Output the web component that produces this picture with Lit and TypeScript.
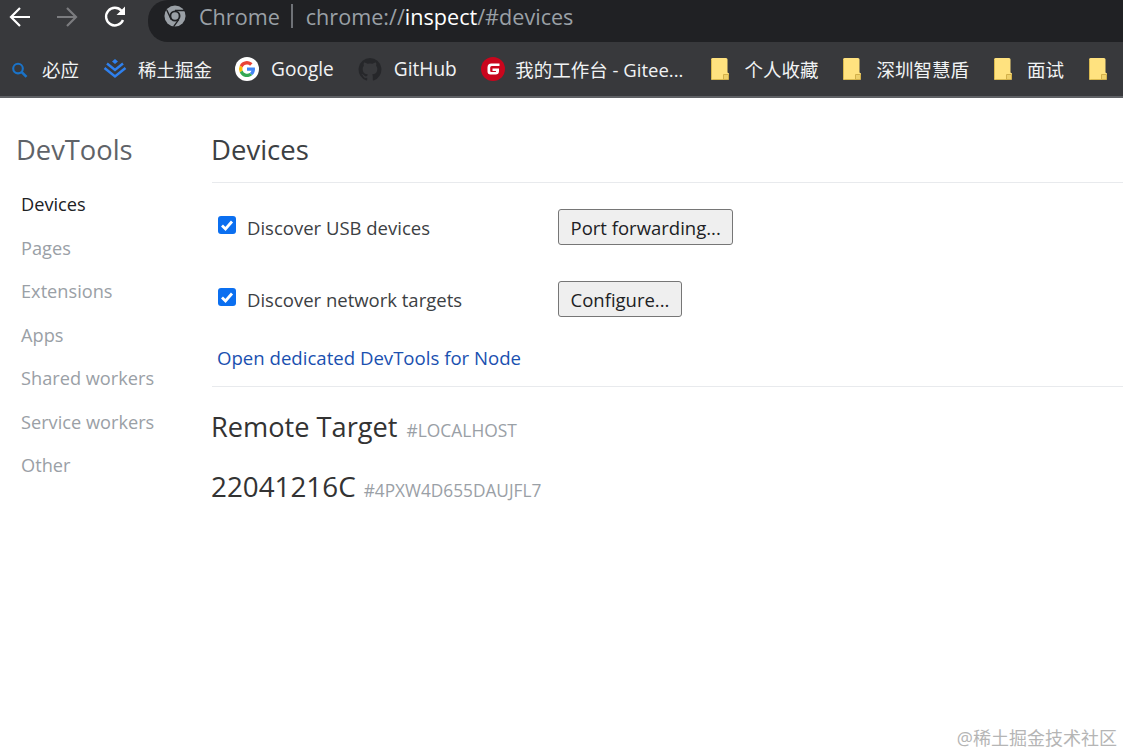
import { LitElement, html, css, svg } from "lit";
import { customElement } from "lit/decorators.js";

const folder = html`<svg class="folder" width="18" height="22" viewBox="0 0 18 22">
  <path d="M0 1.500Q0 0 1.500 0H15Q16.500 0 16.500 1.500V14.500L18 15.500V21L17 22H1.500Q0 22 0 20.500Z" fill="#ffe27f" />
  <path d="M0.500 1.500V20.500Q0.500 21.500 1.500 21.500H13" fill="none" stroke="#d9b94f" />
  <path d="M12.500 21.500V16.500H17.500V21L17 21.500Z" fill="#eed06a" stroke="#d3b04a" />
</svg>`;

const icons = {
  bing: svg`<circle cx="10.300" cy="10.900" r="5.500" fill="none" stroke="#1a73c8" stroke-width="2.400" /><path d="M14.500 15L20 20.500" stroke="#1a73c8" stroke-width="3" />`,
  juejin: svg`<path d="M12 2L9 4.500L12 7L15 4.500Z" fill="#2f80ed" /><path d="M4 7.500L12 14L20 7.500M1.500 12L12 20.500L22.500 12" transform="translate(0,-1)" fill="none" stroke="#2f80ed" stroke-width="2.500" />`,
  google: svg`<circle cx="12" cy="12" r="12" fill="#fff" />
    <path d="M12 7.500A4.500 4.500 0 0 1 15.100 8.700L17.500 6.300A8 8 0 0 0 4.800 8.400L7.600 10.600A4.700 4.700 0 0 1 12 7.500Z" fill="#ea4335" />
    <path d="M7.600 10.600L4.800 8.400A8 8 0 0 0 4.800 15.600L7.600 13.400A4.700 4.700 0 0 1 7.600 10.600Z" fill="#fbbc05" />
    <path d="M7.600 13.400L4.800 15.600A8 8 0 0 0 17.400 18L14.800 15.900A4.800 4.800 0 0 1 7.600 13.400Z" fill="#34a853" />
    <path d="M20 12.200C20 11.500 19.900 11 19.800 10.400H12V13.700H16.500A3.900 3.900 0 0 1 14.800 15.900L17.400 18C19 16.600 20 14.600 20 12.200Z" fill="#4285f4" />`,
  github: svg`<path d="M12 1A11.500 11.500 0 0 0 8.400 23.400C9 23.500 9.200 23.100 9.200 22.800V20.800C6 21.500 5.300 19.300 5.300 19.300C4.800 18 4 17.600 4 17.600C3 16.900 4.100 16.900 4.100 16.900C5.200 17 5.800 18.100 5.800 18.100C6.800 19.900 8.500 19.400 9.200 19C9.300 18.300 9.600 17.800 9.900 17.500C7.400 17.200 4.700 16.200 4.700 11.800C4.700 10.500 5.200 9.500 5.900 8.700C5.800 8.400 5.400 7.200 6 5.600C6 5.600 7 5.300 9.200 6.800A11 11 0 0 1 14.800 6.800C17 5.300 18 5.600 18 5.600C18.600 7.200 18.200 8.400 18.100 8.700C18.800 9.500 19.300 10.500 19.300 11.800C19.300 16.200 16.600 17.200 14.100 17.500C14.500 17.800 14.800 18.500 14.800 19.500V22.800C14.800 23.100 15 23.500 15.600 23.400A11.500 11.500 0 0 0 12 1Z" fill="#26272a" />`,
  gitee: svg`<circle cx="12" cy="12" r="12" fill="#c9061d" /><path d="M18.500 6.500H10.500A4 4 0 0 0 6.500 10.500V14.500A3 3 0 0 0 9.500 17.500H14.500A3.500 3.500 0 0 0 18 14V11.500H11.500V14H15V14.500A.7 .7 0 0 1 14.300 15H10.200A1 1 0 0 1 9.200 14V10.500A1.500 1.500 0 0 1 10.700 9H18.500Z" fill="#fff" />`,
};

type Bookmark = { label: string; icon?: keyof typeof icons; size?: number; latin?: boolean };

const bookmarks: Bookmark[] = [
  { label: "必应", icon: "bing", size: 21 },
  { label: "稀土掘金", icon: "juejin", size: 24 },
  { label: "Google", icon: "google", size: 24, latin: true },
  { label: "GitHub", icon: "github", size: 24, latin: true },
  { label: "我的工作台 - Gitee...", icon: "gitee", size: 24 },
  { label: "个人收藏" },
  { label: "深圳智慧盾" },
  { label: "面试" },
  { label: "" },
];

const navItems = ["Devices", "Pages", "Extensions", "Apps", "Shared workers", "Service workers", "Other"];

@customElement("app-root")
export class AppRoot extends LitElement {
  static styles = css`
    :host {
      display: block;
      position: relative;
      height: 755px;
      overflow: hidden;
      background: #fff;
      font-family: "Open Sans", "Noto Sans CJK SC", sans-serif;
      color: #3c4043;
    }
    .toolbar {
      display: flex;
      align-items: center;
      height: 42px;
      background: #38393c;
    }
    .nav-btns {
      display: flex;
      align-items: center;
      width: 148px;
      box-sizing: border-box;
      padding: 0 0 8px 8px;
      flex: none;
    }
    .nav-btns .fwd {
      margin: 0 23px;
    }
    .omnibox {
      flex: 1;
      height: 42px;
      display: flex;
      align-items: center;
      padding: 0 0 10px 16px;
      box-sizing: border-box;
      background: #202124;
      border-radius: 20px 0 0 20px;
      font-size: 21.600px;
      color: #9aa0a6;
      white-space: nowrap;
    }
    .omnibox .site {
      margin-left: 13px;
    }
    .omnibox .sep {
      width: 2px;
      height: 24px;
      margin: 0 13px 0 11px;
      background: #6f7277;
    }
    .omnibox b {
      font-weight: 500;
      color: #fff;
    }
    .bookmarks {
      display: flex;
      align-items: center;
      height: 54px;
      padding-left: 9px;
      background: #38393c;
      border-bottom: 2px solid #5f6165;
      overflow: hidden;
    }
    .bookmark {
      display: flex;
      align-items: center;
      flex: none;
      gap: 12px;
      margin-right: 24px;
      font-size: 18.500px;
      color: #f1f3f4;
      white-space: nowrap;
    }
    .bookmark:nth-child(2) {
      gap: 11px;
      margin-right: 23px;
    }
    .bookmark:nth-child(5) {
      gap: 10.500px;
      margin-right: 28px;
    }
    .bookmark:nth-child(n + 6) {
      margin-right: 25px;
    }
    .bookmark.latin {
      font-size: 19.100px;
    }
    .bookmark svg {
      flex: none;
      display: block;
    }
    .folder {
      margin-right: 3px;
    }
    .page {
      display: flex;
    }
    aside {
      width: 212px;
      flex: none;
    }
    aside h1 {
      margin: 0;
      padding: 32px 0 0 16px;
      height: 52px;
      font-size: 27.300px;
      line-height: 39px;
      font-weight: 400;
      color: #5f6368;
    }
    aside ul {
      list-style: none;
      margin: 0;
      padding: 1px 0 0 21px;
    }
    aside li {
      height: 43.500px;
      line-height: 43.500px;
      font-size: 18.200px;
      color: #9aa0a6;
      white-space: nowrap;
    }
    aside li.selected {
      color: #202124;
    }
    main {
      flex: 1;
    }
    main > h2 {
      margin: 0;
      padding-top: 32px;
      height: 52px;
      line-height: 39px;
      font-size: 27.500px;
      font-weight: 400;
      color: #3c4043;
      text-indent: -1px;
      border-bottom: 1px solid #e8eaed;
    }
    .option {
      display: flex;
      align-items: center;
      height: 36px;
      padding-left: 6px;
      font-size: 18.500px;
      white-space: nowrap;
    }
    .option.first {
      margin-top: 26px;
    }
    .option + .option {
      margin-top: 36px;
    }
    .check {
      width: 18px;
      height: 18px;
      flex: none;
      margin-top: -4px;
      display: block;
    }
    .option label {
      width: 311px;
      margin-left: 11px;
      padding-top: 1px;
      flex: none;
    }
    .option button {
      height: 36px;
      padding: 1px 11.500px 0;
      font: inherit;
      color: #202124;
      background: #efefef;
      border: 1px solid #767676;
      border-radius: 3px;
    }
    .link {
      display: block;
      margin-top: 25px;
      padding: 0 0 12px 5px;
      line-height: 32px;
      font-size: 18.600px;
      color: #1a50b0;
      text-decoration: none;
      border-bottom: 1px solid #e8eaed;
    }
    .target {
      display: flex;
      align-items: baseline;
      margin-left: -1px;
      white-space: nowrap;
      color: #333;
      line-height: 40px;
    }
    .target small {
      color: #9aa0a6;
      font-size: 17.400px;
      margin-left: 9px;
    }
    .remote {
      margin-top: 20px;
      font-size: 27.200px;
    }
    .device {
      margin-top: 16px;
      font-size: 27.800px;
    }
    .device small {
      margin-left: 8px;
      font-size: 17.250px;
    }
    .watermark {
      position: absolute;
      right: 6px;
      bottom: 5px;
      font-size: 18px;
      line-height: 24px;
      color: #b5b5b5;
    }
  `;

  renderBookmark(b: Bookmark) {
    const icon = b.icon
      ? html`<svg width=${b.size!} height=${b.size!} viewBox="0 0 24 24">${icons[b.icon]}</svg>`
      : folder;
    return html`<div class="bookmark ${b.latin ? "latin" : ""}">${icon}<span>${b.label}</span></div>`;
  }

  renderCheck() {
    return html`<svg class="check" viewBox="0 0 18 18">
      <rect width="18" height="18" rx="3" fill="#0b6ff0" />
      <path d="M4 9.500L7.500 13L14 5.500" fill="none" stroke="#fff" stroke-width="2.800" />
    </svg>`;
  }

  render() {
    return html`
      <div class="toolbar">
        <div class="nav-btns">
          <svg width="24" height="24" viewBox="0 0 24 24"><path d="M22 12H3M12 3L3 12L12 21" fill="none" stroke="#fff" stroke-width="2.200" /></svg>
          <svg class="fwd" width="24" height="24" viewBox="0 0 24 24"><path d="M2 12H21M12 3L21 12L12 21" fill="none" stroke="#7b7c7f" stroke-width="2.200" /></svg>
          <svg width="26" height="26" viewBox="0 0 26 26"><path d="M21 16A8.800 8.800 0 1 1 19.500 6.800" fill="none" stroke="#fff" stroke-width="2.400" /><path d="M23 2.500V11H14.500Z" fill="#fff" /></svg>
        </div>
        <div class="omnibox">
          <svg width="22" height="22" viewBox="0 0 24 24">
            <circle cx="12" cy="12" r="11.500" fill="#9aa0a6" />
            <circle cx="12" cy="12" r="6" fill="#202124" />
            <circle cx="12" cy="12" r="4" fill="#9aa0a6" />
            <path d="M12 6H22.500M8 16L3 5.500M16 16L10.500 23.500" stroke="#202124" stroke-width="1.500" />
          </svg>
          <span class="site">Chrome</span>
          <span class="sep"></span>
          <span>chrome://<b>inspect</b>/#devices</span>
        </div>
      </div>
      <div class="bookmarks">${bookmarks.map((b) => this.renderBookmark(b))}</div>
      <div class="page">
        <aside>
          <h1>DevTools</h1>
          <ul>
            ${navItems.map((n, i) => html`<li class=${i === 0 ? "selected" : ""}>${n}</li>`)}
          </ul>
        </aside>
        <main>
          <h2>Devices</h2>
          <div class="option first">
            ${this.renderCheck()}
            <label>Discover USB devices</label>
            <button>Port forwarding...</button>
          </div>
          <div class="option">
            ${this.renderCheck()}
            <label>Discover network targets</label>
            <button>Configure...</button>
          </div>
          <a class="link">Open dedicated DevTools for Node</a>
          <div class="target remote">Remote Target<small>#LOCALHOST</small></div>
          <div class="target device">22041216C<small>#4PXW4D655DAUJFL7</small></div>
        </main>
      </div>
      <div class="watermark">@稀土掘金技术社区</div>
    `;
  }
}
